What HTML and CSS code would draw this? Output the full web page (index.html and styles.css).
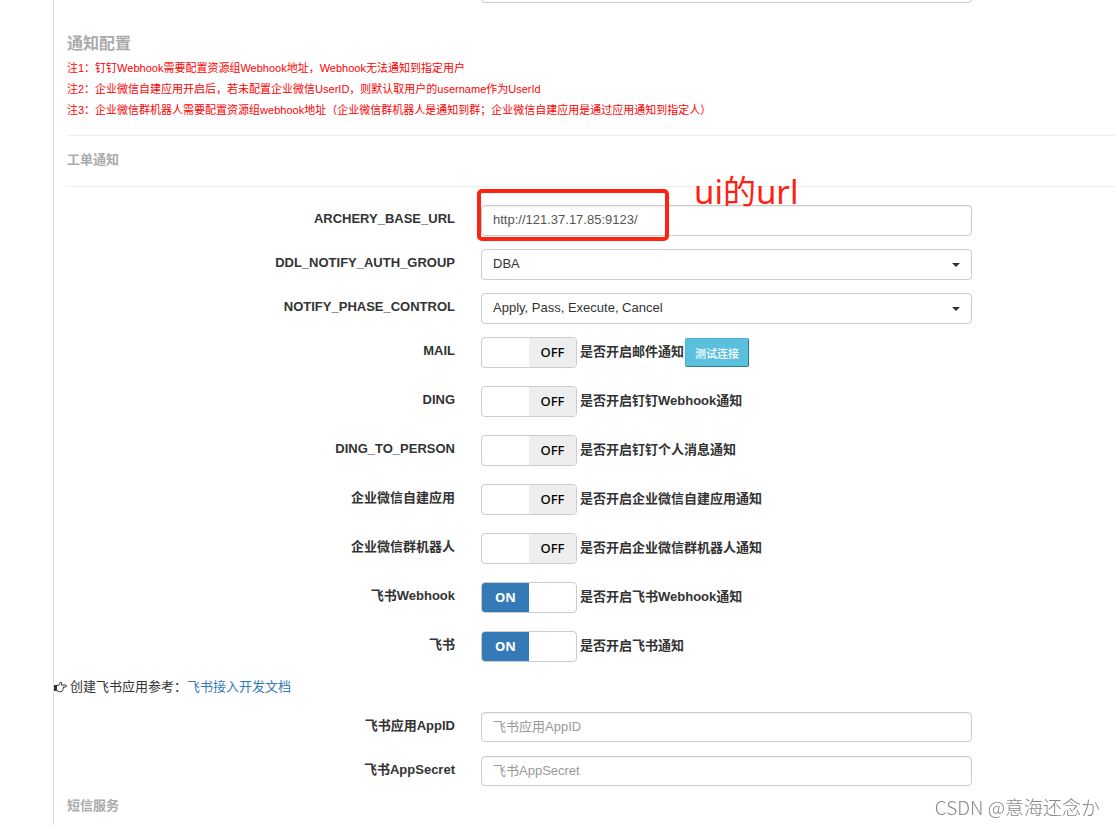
FILE: index.html
```html
<!DOCTYPE html>
<html lang="zh-CN">
<head>
<meta charset="utf-8">
<meta name="viewport" content="width=device-width, initial-scale=1">
<title>通知配置</title>
<link rel="stylesheet" href="styles.css">
</head>
<body>
<main class="content">
  <div class="row row-first">
    <input class="control control-cut" type="text" aria-label="配置项">
  </div>

  <header class="section">
    <h1 class="title">通知配置</h1>
    <p class="note">注1：钉钉Webhook需要配置资源组Webhook地址，Webhook无法通知到指定用户</p>
    <p class="note">注2：企业微信自建应用开启后，若未配置企业微信UserID，则默认取用户的username作为UserId</p>
    <p class="note">注3：企业微信群机器人需要配置资源组webhook地址（企业微信群机器人是通知到群；企业微信自建应用是通过应用通知到指定人）</p>
  </header>
  <h2 class="subtitle subtitle-ruled">工单通知</h2>

  <form class="form">
    <div class="row">
      <label class="name" for="base-url">ARCHERY_BASE_URL</label>
      <div class="field">
        <input class="control" id="base-url" type="text" value="http://121.37.17.85:9123/">
        <span class="mark-box"></span>
        <span class="mark-text">ui的url</span>
      </div>
    </div>
    <div class="row">
      <label class="name" for="auth-group">DDL_NOTIFY_AUTH_GROUP</label>
      <div class="field field-select">
        <select class="control" id="auth-group"><option>DBA</option></select>
        <span class="caret"></span>
      </div>
    </div>
    <div class="row">
      <label class="name" for="phase">NOTIFY_PHASE_CONTROL</label>
      <div class="field field-select">
        <select class="control" id="phase"><option>Apply, Pass, Execute, Cancel</option></select>
        <span class="caret"></span>
      </div>
    </div>

    <div class="switches">
      <div class="row">
        <label class="name" for="mail">MAIL</label>
        <div class="field field-switch">
          <label class="switch"><input class="switch-input" id="mail" type="checkbox"><span class="track"><span class="on">ON</span><span class="off">OFF</span></span><span class="about">是否开启邮件通知</span></label>
          <button class="test" type="button">测试连接</button>
        </div>
      </div>
      <div class="row">
        <label class="name" for="ding">DING</label>
        <div class="field field-switch">
          <label class="switch"><input class="switch-input" id="ding" type="checkbox"><span class="track"><span class="on">ON</span><span class="off">OFF</span></span><span class="about">是否开启钉钉Webhook通知</span></label>
        </div>
      </div>
      <div class="row">
        <label class="name" for="ding-person">DING_TO_PERSON</label>
        <div class="field field-switch">
          <label class="switch"><input class="switch-input" id="ding-person" type="checkbox"><span class="track"><span class="on">ON</span><span class="off">OFF</span></span><span class="about">是否开启钉钉个人消息通知</span></label>
        </div>
      </div>
      <div class="row">
        <label class="name" for="wx-app">企业微信自建应用</label>
        <div class="field field-switch">
          <label class="switch"><input class="switch-input" id="wx-app" type="checkbox"><span class="track"><span class="on">ON</span><span class="off">OFF</span></span><span class="about">是否开启企业微信自建应用通知</span></label>
        </div>
      </div>
      <div class="row">
        <label class="name" for="wx-bot">企业微信群机器人</label>
        <div class="field field-switch">
          <label class="switch"><input class="switch-input" id="wx-bot" type="checkbox"><span class="track"><span class="on">ON</span><span class="off">OFF</span></span><span class="about">是否开启企业微信群机器人通知</span></label>
        </div>
      </div>
      <div class="row">
        <label class="name" for="fs-hook">飞书Webhook</label>
        <div class="field field-switch">
          <label class="switch"><input class="switch-input" id="fs-hook" type="checkbox" checked><span class="track"><span class="on">ON</span><span class="off">OFF</span></span><span class="about">是否开启飞书Webhook通知</span></label>
        </div>
      </div>
      <div class="row">
        <label class="name" for="fs">飞书</label>
        <div class="field field-switch">
          <label class="switch"><input class="switch-input" id="fs" type="checkbox" checked><span class="track"><span class="on">ON</span><span class="off">OFF</span></span><span class="about">是否开启飞书通知</span></label>
        </div>
      </div>
    </div>

    <p class="hint">
      <svg class="hand" viewBox="0 0 13 12" aria-hidden="true"><path fill="#333" d="M0 4h3v6H0z"/><path d="M3 4.500H4.500L6.500 1.200Q7.800.8 7.800 2.200L7.300 4H11.500Q12.500 4.200 12.500 5T11.500 6H9.300Q10 7 9 7.800Q9.400 9 8.300 9.500Q8.200 10.700 7 10.700H5.500L3 9.800" fill="none" stroke="#333"/></svg>
      <span>创建飞书应用参考：<a class="link" href="#doc">飞书接入开发文档</a></span>
    </p>

    <div class="row">
      <label class="name" for="app-id">飞书应用AppID</label>
      <div class="field"><input class="control control-short" id="app-id" type="text" placeholder="飞书应用AppID"></div>
    </div>
    <div class="row">
      <label class="name" for="app-secret">飞书AppSecret</label>
      <div class="field"><input class="control control-short" id="app-secret" type="text" placeholder="飞书AppSecret"></div>
    </div>
  </form>
  <h2 class="subtitle">短信服务</h2>
</main>
<div class="watermark">CSDN @意海还念か</div>
</body>
</html>
```

FILE: styles.css
```css
* { box-sizing: border-box; }

body {
  margin: 0;
  background: #fff;
  color: #333;
  font: 13px/18px "Liberation Sans", "Noto Sans CJK SC", sans-serif;
}

.content {
  min-height: 100vh;
  margin-left: 53px;
  border-left: 1px solid #ddd;
}

.row {
  display: grid;
  grid-template-columns: 427fr 491fr 143fr;
  align-items: start;
  min-height: 31px;
}

.row-first {
  height: 3px;
  min-height: 0;
  align-content: end;
  overflow: hidden;
}

.control {
  display: block;
  width: 100%;
  height: 31px;
  margin: 0;
  padding: 0 11px 2px;
  border: 1px solid #ccc;
  border-radius: 4px;
  background: #fff;
  box-shadow: inset 0 1px 1px rgba(0, 0, 0, .07);
  color: #555;
  font: inherit;
}

.control-short { height: 30px; }
.control-cut { grid-column: 2; }
.control::placeholder { color: #999; }

.section {
  margin-left: 13px;
  padding: 30px 0 14px;
  border-bottom: 1px solid #eee;
}

.title {
  margin: 0 0 3px;
  color: #aaa;
  font-size: 16px;
  font-weight: 700;
  line-height: 22px;
}

.note {
  margin: 0;
  color: #f00;
  font-size: 11px;
  line-height: 21px;
}

.subtitle {
  margin: 10px 0 0 13px;
  color: #aaa;
  font-size: 13px;
  line-height: 18px;
}

.subtitle-ruled {
  margin-top: 15px;
  padding-bottom: 17px;
  border-bottom: 1px solid #eee;
}

.form {
  display: grid;
  gap: 13px;
  padding-top: 18px;
}

.name {
  padding: 5px 26px 0 0;
  font-weight: 700;
  text-align: right;
}

.field { position: relative; }

.field-select .control {
  appearance: none;
  box-shadow: none;
  color: #333;
}

.caret {
  position: absolute;
  top: 14px;
  right: 12px;
  border: 4px solid transparent;
  border-top-color: #333;
  border-bottom: 0;
  pointer-events: none;
}

.mark-box {
  position: absolute;
  top: -16px;
  left: -4px;
  width: 192px;
  height: 52px;
  border: 4px solid #ff2112;
  border-radius: 5px;
  pointer-events: none;
}

.mark-text {
  position: absolute;
  top: -33px;
  left: 213px;
  color: #ff2112;
  font: 33px/40px "Noto Sans", "Noto Sans CJK SC", sans-serif;
}

.switches { display: grid; gap: 18px; }

.field-switch {
  display: flex;
  align-items: center;
  gap: 1px;
  white-space: nowrap;
}

.switch {
  display: flex;
  align-items: center;
  gap: 3px;
  position: relative;
  font-weight: 700;
}

.about { padding-bottom: 2px; }

.switch-input {
  position: absolute;
  width: 96px;
  height: 31px;
  margin: 0;
  opacity: 0;
}

.track {
  display: grid;
  grid-template-columns: 1fr 1fr;
  width: 96px;
  height: 31px;
  overflow: hidden;
  border: 1px solid #ccc;
  border-radius: 4px;
  font-family: "Noto Sans", sans-serif;
  font-weight: 500;
  line-height: 29px;
  text-align: center;
}

.on { color: #fff; background: #337ab7; font-weight: 700; }
.off { color: #000; background: #eee; }
.switch-input:not(:checked) + .track .on,
.switch-input:checked + .track .off { visibility: hidden; }

.test {
  height: 29px;
  padding: 0 9px;
  border: 1px solid #46b8da;
  border-right-color: #2c7a91;
  border-bottom-color: #2c7a91;
  border-radius: 2px;
  background: #5bc0de;
  color: #fff;
  font: 500 11px/18px "Noto Sans CJK SC", sans-serif;
}

.hint {
  display: flex;
  align-items: center;
  gap: 3px;
  margin: 3px 0;
}

.hand { width: 13px; height: 12px; }
.link { color: #337ab7; text-decoration: none; }

.watermark {
  position: fixed;
  right: 15px;
  bottom: 5px;
  color: #888;
  font: 300 19px/26px "Noto Sans CJK SC", "Noto Sans CJK JP", sans-serif;
}
```
